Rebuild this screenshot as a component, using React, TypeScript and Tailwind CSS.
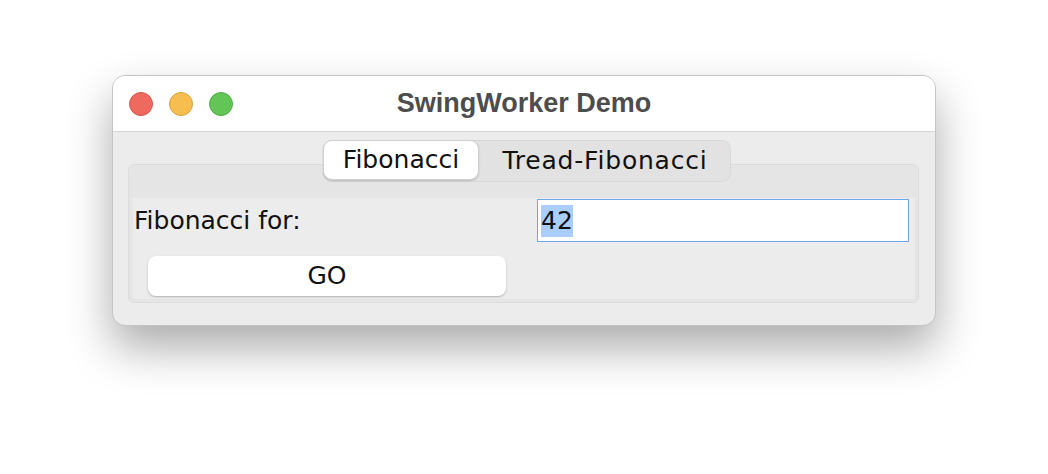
import React from 'react';

const uiFont = { fontFamily: '"DejaVu Sans", sans-serif' };

const TrafficLights = () => (
  <div className="flex items-center gap-4 pl-4">
    <span className="block h-6 w-6 rounded-full bg-[#ee6a5f] border border-[#d6564b]" />
    <span className="block h-6 w-6 rounded-full bg-[#f5be4f] border border-[#d9a23c]" />
    <span className="block h-6 w-6 rounded-full bg-[#62c555] border border-[#4ead43]" />
  </div>
);

const App = () => {
  return (
    <div className="min-h-[474px] w-[1048px] bg-white pt-[75px] pl-[112px]">
      <div className="w-[824px] h-[251px] rounded-[13px] border border-[#c4c4c4] bg-[#ececec] overflow-hidden shadow-[0_22px_45px_rgba(0,0,0,0.33)] flex flex-col">
        {/* title bar */}
        <div className="relative h-[56px] shrink-0 bg-white border-b border-[#d6d6d6] flex items-center">
          <TrafficLights />
          <div
            className="absolute inset-0 flex items-center justify-center text-[27px] font-bold text-[#4d4d4d]"
            style={{ fontFamily: '"Liberation Sans", Arial, sans-serif' }}
          >
            SwingWorker Demo
          </div>
        </div>

        {/* body */}
        <div className="flex-1 pt-[8px] pl-[15px] pr-[16px]" style={uiFont}>
          <div className="relative z-10 flex justify-center">
            <div className="flex h-[42px] rounded-[9px] bg-[#e2e2e2] border border-[#d8d8d8] ml-[7px]">
              <div className="w-[156px] h-full -m-px rounded-[9px] bg-white border border-[#d0d0d0] shadow-[0_1px_2px_rgba(0,0,0,0.18)] flex items-center justify-center text-[25px] text-[#111]">
                Fibonacci
              </div>
              <div className="w-[252px] h-full flex items-center justify-center pl-[2px] text-[25px] tracking-[0.8px] text-[#111]">
                Tread-Fibonacci
              </div>
            </div>
          </div>

          <div className="-mt-[18px] h-[139px] rounded-[6px] border border-[#dcdcdc] bg-[#e5e5e5] pt-[33px] pl-[4px] pr-[3px] pb-[3px]">
            <div className="h-full bg-[#ececec] flex flex-col">
              <div className="flex items-center h-[45px]">
                <div className="w-[404px] pl-[1px] text-[25px] text-[#111]">Fibonacci for:</div>
                <div className="w-[372px] h-[43px] bg-white border border-[#6ea6ec] flex items-center pl-[3px]">
                  <span className="bg-[#a9cefb] text-[25px] leading-[32px] text-[#111]">42</span>
                </div>
              </div>
              <div className="pl-[15px] mt-[13px]">
                <button className="w-[358px] h-[40px] rounded-[8px] bg-white shadow-[0_1px_2px_rgba(0,0,0,0.25)] text-[25px] text-[#111] flex items-center justify-center">
                  GO
                </button>
              </div>
            </div>
          </div>
        </div>
      </div>
    </div>
  );
};

export default App;
